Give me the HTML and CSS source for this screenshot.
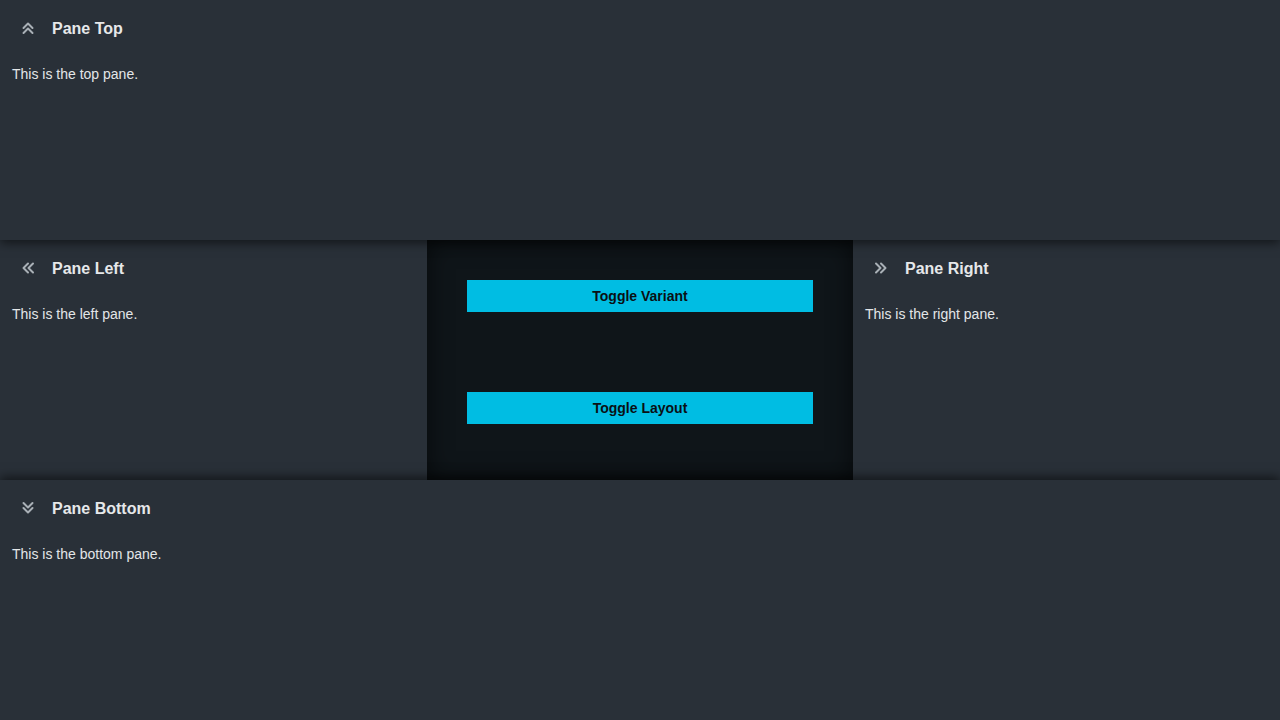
FILE: index.html
```html
<!DOCTYPE html>
<html>
<head>
<meta charset="utf-8">
<link rel="stylesheet" href="styles.css">
</head>
<body>
<div class="layout">
  <section class="pane pane-top">
    <header class="pane-header">
      <span class="pane-icon"><svg width="16" height="16" viewBox="0 0 16 16"><polyline points="3.5,8 8,3.5 12.5,8" /><polyline points="3.5,13 8,8.5 12.5,13" /></svg></span>
      <h2 class="pane-title">Pane Top</h2>
    </header>
    <p class="pane-text">This is the top pane.</p>
  </section>
  <div class="middle">
    <section class="pane pane-side">
      <header class="pane-header">
        <span class="pane-icon"><svg width="16" height="16" viewBox="0 0 16 16"><polyline points="8,3.5 3.5,8 8,12.5" /><polyline points="13,3.5 8.5,8 13,12.5" /></svg></span>
        <h2 class="pane-title">Pane Left</h2>
      </header>
      <p class="pane-text">This is the left pane.</p>
    </section>
    <main class="center">
      <button class="toggle">Toggle Variant</button>
      <button class="toggle">Toggle Layout</button>
    </main>
    <section class="pane pane-side">
      <header class="pane-header">
        <span class="pane-icon"><svg width="16" height="16" viewBox="0 0 16 16"><polyline points="3,3.5 7.5,8 3,12.5" /><polyline points="8,3.5 12.5,8 8,12.5" /></svg></span>
        <h2 class="pane-title">Pane Right</h2>
      </header>
      <p class="pane-text">This is the right pane.</p>
    </section>
  </div>
  <section class="pane pane-bottom">
    <header class="pane-header">
      <span class="pane-icon"><svg width="16" height="16" viewBox="0 0 16 16"><polyline points="3.5,3 8,7.5 12.5,3" /><polyline points="3.5,8 8,12.5 12.5,8" /></svg></span>
      <h2 class="pane-title">Pane Bottom</h2>
    </header>
    <p class="pane-text">This is the bottom pane.</p>
  </section>
</div>
</body>
</html>
```
FILE: styles.css
```css
html, body {
  margin: 0;
  padding: 0;
  height: 100%;
  background: #293038;
  font-family: "Liberation Sans", Arial, sans-serif;
  color: #e3e6e8;
}
.layout {
  display: grid;
  grid-template-rows: 240px 240px 240px;
  height: 720px;
  overflow: hidden;
}
.pane {
  background: #293038;
  position: relative;
}
.pane-top {
  z-index: 2;
  box-shadow: 0 3px 10px rgba(0, 0, 0, 0.55);
}
.pane-bottom {
  z-index: 2;
  box-shadow: 0 -3px 10px rgba(0, 0, 0, 0.55);
}
.middle {
  display: grid;
  grid-template-columns: 427px 426px 427px;
  z-index: 1;
}
.pane-header {
  display: flex;
  align-items: center;
  height: 56px;
  padding: 0 12px;
  gap: 8px;
}
.pane-icon {
  width: 32px;
  height: 32px;
  display: flex;
  align-items: center;
  justify-content: center;
}
.pane-icon svg {
  fill: none;
  stroke: #a9b0b6;
  stroke-width: 2;
  stroke-linecap: round;
  stroke-linejoin: round;
}
.pane-title {
  margin: 2px 0 0;
  font-size: 16px;
  font-weight: bold;
  color: #e6e8ea;
}
.pane-text {
  margin: 8px 12px 0;
  font-size: 14px;
  line-height: 20px;
  color: #e3e6e8;
}
.center {
  background: #0f1519;
  box-shadow: inset 0 0 24px rgba(0, 0, 0, 0.6);
  padding: 40px;
  display: flex;
  flex-direction: column;
  gap: 80px;
}
.toggle {
  height: 32px;
  border: none;
  background: #00bde3;
  color: #0a1014;
  font-family: "Liberation Sans", Arial, sans-serif;
  font-size: 14px;
  font-weight: bold;
  padding: 0;
}
```
